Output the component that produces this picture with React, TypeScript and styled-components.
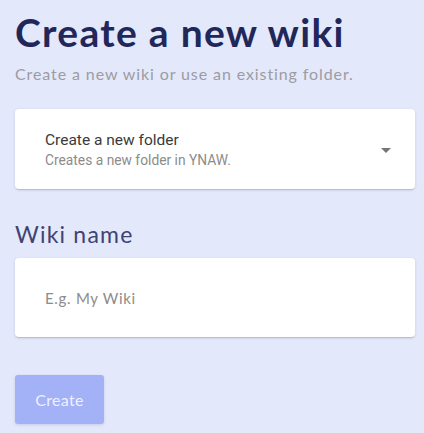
import React from "react";
import styled, { createGlobalStyle } from "styled-components";

const GlobalStyle = createGlobalStyle`
    * {
        box-sizing: border-box;
    }
    body {
        margin: 0;
        background-color: #e3e8fb;
        font-family: "Lato", "Liberation Sans", sans-serif;
    }
`;

const Page = styled.div`
    width: 100%;
    min-height: 433px;
    padding: 10px 9px 9px 15px;
    display: flex;
    flex-direction: column;
    background-color: #e3e8fb;
`;

const Title = styled.h1`
    margin: 0;
    font-family: "Lato", "Liberation Sans", sans-serif;
    font-size: 39px;
    line-height: 44px;
    font-weight: 700;
    letter-spacing: 1.3px;
    color: #22275a;
`;

const Subtitle = styled.p`
    margin: 11px 0 0 0;
    font-family: "Lato", "Liberation Sans", sans-serif;
    font-size: 16px;
    line-height: 18px;
    letter-spacing: 0.9px;
    color: #9c9ca2;
`;

const Card = styled.div<{ $height: number }>`
    width: 400px;
    height: ${(p) => p.$height}px;
    padding: 0 24px 0 30px;
    display: flex;
    align-items: center;
    background-color: white;
    border-radius: 4px;
    box-shadow: 0px 2px 1px -1px rgba(0, 0, 0, 0.12),
        0px 1px 3px 0px rgba(40, 50, 120, 0.16);
`;

const SelectCard = styled(Card)`
    margin-top: 26px;
    justify-content: space-between;
    cursor: pointer;
`;

const SelectText = styled.div`
    display: flex;
    flex-direction: column;
`;

const SelectMain = styled.span`
    font-family: Roboto, "Liberation Sans", sans-serif;
    font-size: 15.5px;
    line-height: 20px;
    font-weight: 400;
    color: #3a3a3a;
`;

const SelectSecondary = styled.span`
    margin-top: 2px;
    font-family: Roboto, "Liberation Sans", sans-serif;
    font-size: 13.8px;
    line-height: 16px;
    color: #8c8c8c;
`;

const Arrow = styled.span`
    width: 0;
    height: 0;
    margin-top: 2px;
    border-left: 5px solid transparent;
    border-right: 5px solid transparent;
    border-top: 5px solid #757575;
`;

const Label = styled.h2`
    margin: 30px 0 0 0;
    font-family: "Lato", "Liberation Sans", sans-serif;
    font-size: 23px;
    line-height: 30px;
    font-weight: 400;
    letter-spacing: 1.2px;
    color: #3f4373;
`;

const InputCard = styled(Card)`
    margin-top: 9px;
`;

const Input = styled.input`
    width: 100%;
    border: none;
    outline: none;
    padding: 0;
    background: transparent;
    font-family: "Lato", "Liberation Sans", sans-serif;
    font-size: 15px;
    letter-spacing: 0.7px;
    color: #333333;
    &::placeholder {
        color: #8c8c8c;
    }
`;

const Button = styled.button`
    margin-top: 38px;
    width: 89px;
    height: 49px;
    align-self: flex-start;
    border: none;
    border-radius: 3px;
    background-color: #a3b1f7;
    color: #eef0ff;
    font-family: "Lato", "Liberation Sans", sans-serif;
    font-size: 16px;
    letter-spacing: 0.3px;
    box-shadow: 0px 1px 3px rgba(40, 50, 120, 0.15);
    cursor: default;
`;

const App: React.FC = () => {
    return (
        <Page>
            <GlobalStyle />
            <Title>Create a new wiki</Title>
            <Subtitle>Create a new wiki or use an existing folder.</Subtitle>
            <SelectCard $height={80}>
                <SelectText>
                    <SelectMain>Create a new folder</SelectMain>
                    <SelectSecondary>Creates a new folder in YNAW.</SelectSecondary>
                </SelectText>
                <Arrow />
            </SelectCard>
            <Label>Wiki name</Label>
            <InputCard $height={79}>
                <Input placeholder="E.g. My Wiki" />
            </InputCard>
            <Button disabled>Create</Button>
        </Page>
    );
};

export default App;
